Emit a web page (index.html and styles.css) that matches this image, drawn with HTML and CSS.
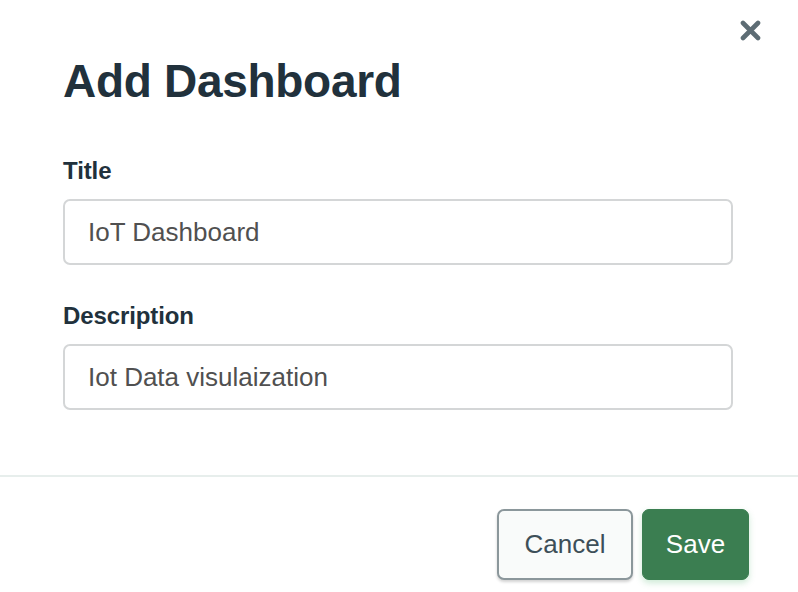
FILE: index.html
```html
<!DOCTYPE html>
<html lang="en">
<head>
<meta charset="utf-8">
<title>Add Dashboard</title>
<link rel="stylesheet" href="styles.css">
</head>
<body>
<div class="modal">
  <button class="close" aria-label="Close">
    <svg width="21" height="21" viewBox="0 0 21 21"><path d="M3 3 L18 18 M18 3 L3 18" stroke="#5d6c74" stroke-width="4.6" stroke-linecap="round"/></svg>
  </button>
  <div class="content">
    <h1 class="heading">Add Dashboard</h1>
    <div class="field first">
      <label class="label" for="title">Title</label>
      <input class="input" id="title" type="text" value="IoT Dashboard">
    </div>
    <div class="field">
      <label class="label" for="desc">Description</label>
      <input class="input" id="desc" type="text" value="Iot Data visulaization">
    </div>
  </div>
  <div class="footer">
    <button class="btn btn-cancel">Cancel</button>
    <button class="btn btn-save">Save</button>
  </div>
</div>
</body>
</html>
```
FILE: styles.css
```css
html, body {
  margin: 0;
  padding: 0;
  background: #ffffff;
}
body {
  font-family: "Liberation Sans", Arial, sans-serif;
  color: #21313c;
}
.modal {
  position: relative;
  width: 798px;
  height: 592px;
}
.close {
  position: absolute;
  top: 20px;
  left: 740px;
  width: 21px;
  height: 21px;
  padding: 0;
  border: 0;
  background: none;
  display: flex;
  cursor: pointer;
}
.content {
  padding: 55px 65px 65px 63px;
}
.heading {
  margin: 0;
  font-size: 46px;
  line-height: 52px;
  font-weight: 700;
  letter-spacing: -0.3px;
  color: #21313c;
}
.field {
  margin-top: 37px;
}
.field.first {
  margin-top: 50px;
}
.label {
  display: block;
  font-size: 24px;
  line-height: 28px;
  font-weight: 700;
  letter-spacing: -0.1px;
  color: #21313c;
  margin-bottom: 14px;
}
.input {
  display: block;
  box-sizing: border-box;
  width: 100%;
  height: 66px;
  margin: 0;
  padding: 0 23px;
  border: 2px solid #d4d6d7;
  border-radius: 7px;
  font-family: "Liberation Sans", Arial, sans-serif;
  font-size: 26px;
  color: #505050;
  background: #ffffff;
  outline: none;
}
.footer {
  border-top: 2px solid #e7eeec;
  padding: 32px 49px 0 0;
  display: flex;
  justify-content: flex-end;
  gap: 9px;
}
.btn {
  box-sizing: border-box;
  height: 71px;
  margin: 0;
  border-radius: 7px;
  font-family: "Liberation Sans", Arial, sans-serif;
  font-size: 26px;
  cursor: pointer;
}
.btn-cancel {
  width: 136px;
  background: #f9fbfa;
  border: 2px solid #8b979b;
  color: #3d4f58;
  box-shadow: 0 2px 3px rgba(0, 0, 0, 0.18);
}
.btn-save {
  width: 107px;
  background: #3b7e51;
  border: 1px solid #3b7e51;
  color: #ffffff;
  box-shadow: 0 3px 6px rgba(60, 170, 90, 0.25);
}
```
